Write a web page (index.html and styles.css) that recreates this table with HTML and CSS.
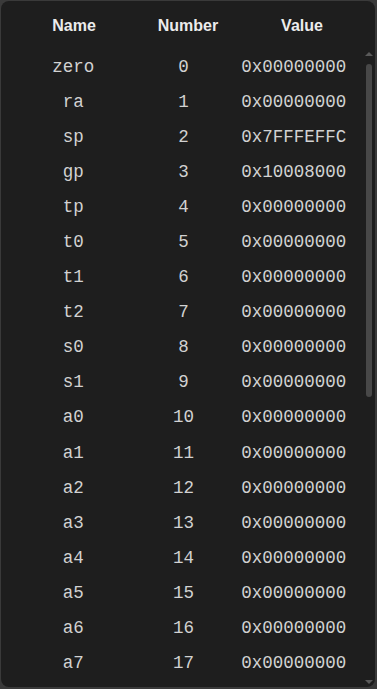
FILE: index.html
```html
<!DOCTYPE html>
<html>
<head>
<meta charset="utf-8">
<link rel="stylesheet" href="styles.css">
</head>
<body>
<div class="panel">
  <div class="head">
    <div class="hcell">Name</div>
    <div class="hcell">Number</div>
    <div class="hcell">Value</div>
  </div>
  <div class="scroller">
    <div class="rows">
      <div class="row"><span>zero</span><span>0</span><span>0x00000000</span></div>
      <div class="row"><span>ra</span><span>1</span><span>0x00000000</span></div>
      <div class="row"><span>sp</span><span>2</span><span>0x7FFFEFFC</span></div>
      <div class="row"><span>gp</span><span>3</span><span>0x10008000</span></div>
      <div class="row"><span>tp</span><span>4</span><span>0x00000000</span></div>
      <div class="row"><span>t0</span><span>5</span><span>0x00000000</span></div>
      <div class="row"><span>t1</span><span>6</span><span>0x00000000</span></div>
      <div class="row"><span>t2</span><span>7</span><span>0x00000000</span></div>
      <div class="row"><span>s0</span><span>8</span><span>0x00000000</span></div>
      <div class="row"><span>s1</span><span>9</span><span>0x00000000</span></div>
      <div class="row"><span>a0</span><span>10</span><span>0x00000000</span></div>
      <div class="row"><span>a1</span><span>11</span><span>0x00000000</span></div>
      <div class="row"><span>a2</span><span>12</span><span>0x00000000</span></div>
      <div class="row"><span>a3</span><span>13</span><span>0x00000000</span></div>
      <div class="row"><span>a4</span><span>14</span><span>0x00000000</span></div>
      <div class="row"><span>a5</span><span>15</span><span>0x00000000</span></div>
      <div class="row"><span>a6</span><span>16</span><span>0x00000000</span></div>
      <div class="row"><span>a7</span><span>17</span><span>0x00000000</span></div>
    </div>
    <div class="sbar">
      <div class="arrow up"></div>
      <div class="track"><div class="thumb"></div></div>
      <div class="arrow down"></div>
    </div>
  </div>
</div>
</body>
</html>
```
FILE: styles.css
```css
html, body {
  margin: 0;
  padding: 0;
  background: #3a3a3a;
}
body {
  padding: 1px 2px 2px 1px;
  height: 689px;
  box-sizing: border-box;
}
.panel {
  height: 686px;
  background: #1e1e1e;
  border-radius: 8px;
  overflow: hidden;
  display: flex;
  flex-direction: column;
}
.head {
  display: grid;
  grid-template-columns: 1fr 1fr 1fr;
  padding: 1px 16px 0;
  height: 48px;
  box-sizing: border-box;
  align-items: center;
  font-family: "Liberation Sans", Arial, sans-serif;
  font-weight: bold;
  font-size: 16px;
  color: #ececec;
}
.hcell {
  text-align: center;
}
.scroller {
  flex: 1;
  display: flex;
  min-height: 0;
  overflow: hidden;
}
.rows {
  flex: 1;
  padding: 0 15px 0 17px;
  font-family: "Liberation Mono", "Courier New", monospace;
  font-size: 17.5px;
  color: #d2d2d2;
}
.row {
  display: grid;
  grid-template-columns: 1fr 1fr 1fr;
  height: 35.1px;
  align-items: center;
}
.row span {
  text-align: center;
}
.sbar {
  width: 10px;
  display: flex;
  flex-direction: column;
  align-items: center;
  padding-right: 1px;
}
.arrow {
  width: 0;
  height: 0;
  border-left: 4px solid transparent;
  border-right: 4px solid transparent;
}
.arrow.up {
  border-bottom: 4px solid #5a5a5a;
  margin-top: 3px;
}
.arrow.down {
  border-top: 4px solid #5a5a5a;
  margin-bottom: 3px;
}
.track {
  flex: 1;
  width: 100%;
  padding-top: 8px;
  display: flex;
  justify-content: center;
}
.thumb {
  width: 6px;
  height: 333px;
  background: #484848;
  border-radius: 3px;
}
```
